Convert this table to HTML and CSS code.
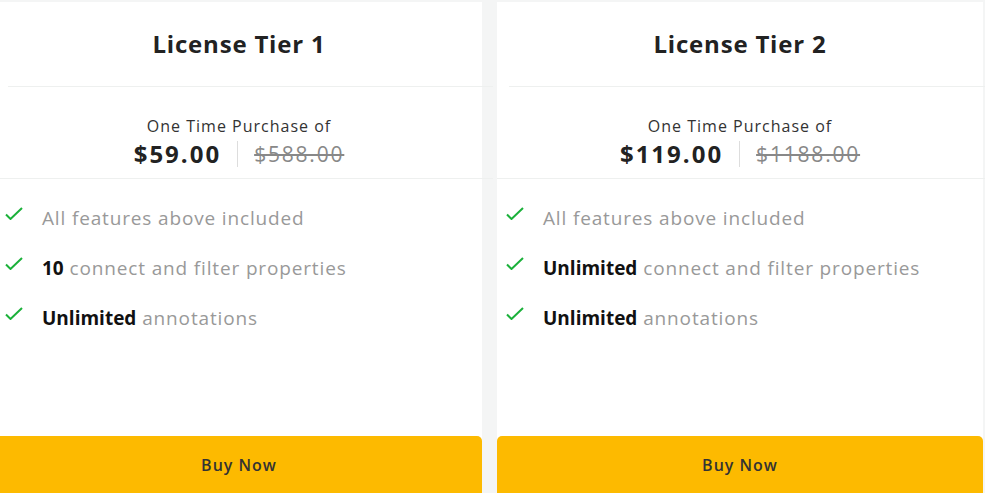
FILE: index.html
```html
<!DOCTYPE html>
<html>
<head>
<meta charset="utf-8">
<link rel="stylesheet" href="styles.css">
</head>
<body>
<div class="plans">
  <div class="card">
    <div class="card-head"><h2 class="title">License Tier 1</h2></div>
    <div class="price-box">
      <div class="price-label">One Time Purchase of</div>
      <div class="price-row">
        <span class="price">$59.00</span>
        <span class="sep"></span>
        <span class="old-price">$588.00</span>
      </div>
    </div>
    <ul class="features">
      <li><svg class="check" viewBox="0 0 18 13" width="18" height="13"><path d="M1 7.5 L5.5 12 L17 1" fill="none" stroke="#1bb13a" stroke-width="2"/></svg><span>All features above included</span></li>
      <li><svg class="check" viewBox="0 0 18 13" width="18" height="13"><path d="M1 7.5 L5.5 12 L17 1" fill="none" stroke="#1bb13a" stroke-width="2"/></svg><span><b>10</b> connect and filter properties</span></li>
      <li><svg class="check" viewBox="0 0 18 13" width="18" height="13"><path d="M1 7.5 L5.5 12 L17 1" fill="none" stroke="#1bb13a" stroke-width="2"/></svg><span><b>Unlimited</b> annotations</span></li>
    </ul>
    <button class="buy">Buy Now</button>
  </div>
  <div class="card">
    <div class="card-head"><h2 class="title">License Tier 2</h2></div>
    <div class="price-box">
      <div class="price-label">One Time Purchase of</div>
      <div class="price-row">
        <span class="price">$119.00</span>
        <span class="sep"></span>
        <span class="old-price">$1188.00</span>
      </div>
    </div>
    <ul class="features">
      <li><svg class="check" viewBox="0 0 18 13" width="18" height="13"><path d="M1 7.5 L5.5 12 L17 1" fill="none" stroke="#1bb13a" stroke-width="2"/></svg><span>All features above included</span></li>
      <li><svg class="check" viewBox="0 0 18 13" width="18" height="13"><path d="M1 7.5 L5.5 12 L17 1" fill="none" stroke="#1bb13a" stroke-width="2"/></svg><span><b>Unlimited</b> connect and filter properties</span></li>
      <li><svg class="check" viewBox="0 0 18 13" width="18" height="13"><path d="M1 7.5 L5.5 12 L17 1" fill="none" stroke="#1bb13a" stroke-width="2"/></svg><span><b>Unlimited</b> annotations</span></li>
    </ul>
    <button class="buy">Buy Now</button>
  </div>
</div>
</body>
</html>
```

FILE: styles.css
```css
html, body {
  margin: 0;
  padding: 0;
  background: #f4f5f5;
  overflow: hidden;
  height: 493px;
}
body {
  font-family: "Open Sans", "Noto Sans", sans-serif;
  color: #222;
}
.plans {
  display: flex;
  gap: 15px;
  margin-left: -4px;
  padding-top: 2px;
  width: 987px;
}
.card {
  width: 486px;
  flex: none;
  height: 498px;
  background: #fff;
  display: flex;
  flex-direction: column;
}
.card-head {
  height: 84px;
  margin-left: 12px;
  margin-right: -11px;
  padding-right: 23px;
  border-bottom: 1px solid #eef0ef;
  display: flex;
  align-items: center;
  justify-content: center;
}
.title {
  margin: 0;
  font-size: 24px;
  line-height: 30px;
  font-weight: 700;
  letter-spacing: 0.8px;
  color: #222;
}
.price-box {
  height: 92px;
  border-bottom: 1px solid #eef0ef;
  margin-right: -11px;
  padding: 29px 11px 0 0;
  display: flex;
  flex-direction: column;
  align-items: center;
  box-sizing: border-box;
}
.price-label {
  font-size: 16px;
  color: #333;
  line-height: 20px;
  letter-spacing: 1px;
}
.price-row {
  display: flex;
  align-items: center;
  gap: 16px;
  margin-top: 3px;
  line-height: 30px;
}
.price {
  font-size: 24px;
  font-weight: 700;
  letter-spacing: 2px;
  color: #222;
}
.sep {
  width: 1px;
  height: 26px;
  background: #ddd;
}
.old-price {
  font-size: 21px;
  color: #888;
  letter-spacing: 1.8px;
  text-decoration: line-through;
}
.features {
  list-style: none;
  margin: 0;
  padding: 14px 0 0 9px;
  flex: 1;
}
.features li {
  display: flex;
  align-items: flex-start;
  height: 50px;
  font-size: 19px;
  color: #999;
  letter-spacing: 0.85px;
}
.features li span {
  line-height: 50px;
}
.features b {
  color: #111;
  font-weight: 700;
  letter-spacing: 0;
}
.check {
  margin-top: 14px;
  margin-right: 19px;
  flex: none;
}
.buy {
  flex: none;
  height: 64px;
  border: none;
  border-radius: 5px;
  background: #fdba00;
  font-family: inherit;
  font-size: 16px;
  font-weight: 600;
  letter-spacing: 1px;
  color: #333;
  padding: 0 0 6px;
}
```
